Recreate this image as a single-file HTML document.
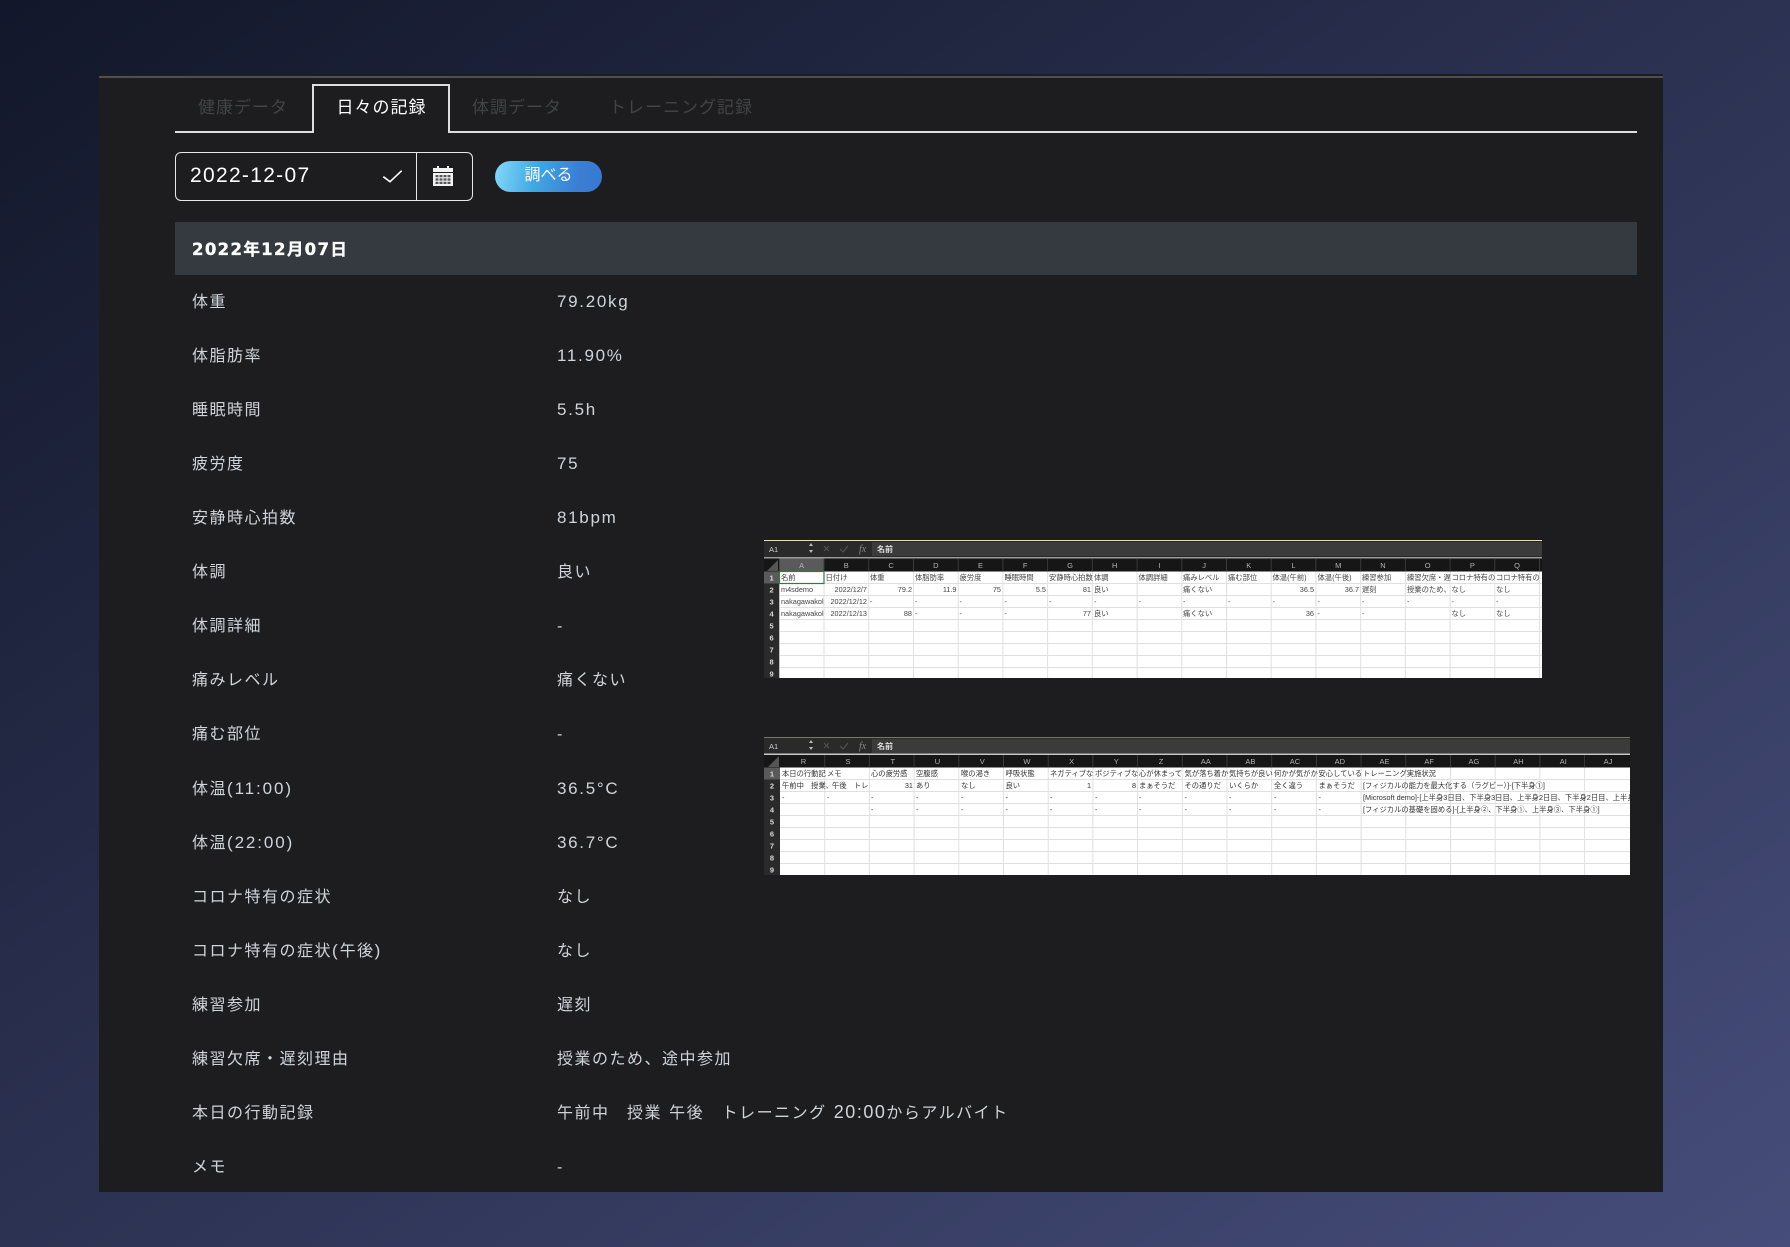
<!DOCTYPE html>
<html lang="ja"><head><meta charset="utf-8"><title>日々の記録</title>
<style>
html,body{margin:0;padding:0;width:1790px;height:1247px;overflow:hidden}
body{position:relative;background:linear-gradient(to bottom right,#12172a 0%,#2c3252 50%,#464d7a 100%);font-family:"Liberation Sans","Noto Sans CJK JP",sans-serif;color:#ced4da}
#panel{position:absolute;left:99px;top:74px;width:1564px;height:1118px;background:#1d1d1f;overflow:hidden}
#panel:before{content:"";position:absolute;left:0;right:0;top:2px;height:2px;background:#4e4f50}
.abs{position:absolute}
.tab{position:absolute;top:23px;line-height:22px;font-size:17px;letter-spacing:1px;color:#414346;white-space:nowrap}
#rows{position:absolute;left:93px;top:201.7px;width:1400px}
.row{height:54.1px;line-height:54.1px;display:flex;font-size:16px;letter-spacing:1.5px;white-space:pre}
.row b{font-weight:400;width:365px;display:block}
.row span{display:block}
.row i{font-style:normal;line-height:1}
.l{font-size:17px;letter-spacing:1.7px;position:relative;top:-1px}
.p{font-size:17px;letter-spacing:1.9px}
svg text{font-family:"Liberation Sans","Noto Sans CJK JP",sans-serif}
.c{font-size:7.3px;fill:#444}
#s2 .c{fill:#333}
.r{text-anchor:end}
.h{font-size:7.5px;fill:#b5b5b5;text-anchor:middle}
.n{font-size:7.5px;fill:#d8d8d8;text-anchor:middle;font-weight:700}
</style></head><body>
<div id="panel">
  <div class="abs" style="left:76px;top:57px;width:1462px;height:1.5px;background:#dedede"></div>
  <div class="abs" style="left:213px;top:10px;width:134px;height:47px;border:2px solid #dedede;border-bottom:0;background:#1d1d1f"></div>
  <div class="abs" style="left:215px;top:57px;width:134px;height:2px;background:#1d1d1f"></div>
  <div class="tab" style="left:99px">健康データ</div>
  <div class="tab" style="left:237.500px;color:#fff">日々の記録</div>
  <div class="tab" style="left:373px">体調データ</div>
  <div class="tab" style="left:510px">トレーニング記録</div>

  <div class="abs" style="left:76px;top:78px;width:296px;height:47px;border:1.5px solid #e8e8e8;border-radius:6px"></div>
  <div class="abs" style="left:316.5px;top:78px;width:1.5px;height:49px;background:#e8e8e8"></div>
  <div class="abs" style="left:91px;top:89px;line-height:26px;font-size:21px;letter-spacing:1.3px;color:#fff">2022-12-07</div>
  <svg class="abs" style="left:280px;top:90px" width="30" height="24" viewBox="0 0 30 24"><path d="M4.3 12.7L11 17.7L22.7 6.7" fill="none" stroke="#fff" stroke-width="1.6"/></svg>
  <svg class="abs" style="left:333px;top:91px" width="22" height="22" viewBox="0 0 22 22">
    <path d="M1 3H5V1H7V3H15V1H17V3H21V7H1Z" fill="#f2f2f2"/>
    <path d="M1 8H21V21H1Z" fill="#f2f2f2"/>
    <path d="M3.5 10h3v2.2h-3zM7.5 10h3v2.2h-3zM11.5 10h3v2.2h-3zM15.5 10h3v2.2h-3zM3.5 13.4h3v2.2h-3zM7.5 13.4h3v2.2h-3zM11.5 13.4h3v2.2h-3zM15.5 13.4h3v2.2h-3zM3.5 16.8h3v2.2h-3zM7.5 16.8h3v2.2h-3zM11.5 16.8h3v2.2h-3zM15.5 16.8h3v2.2h-3z" fill="#55565a"/>
  </svg>
  <div class="abs" style="left:396px;top:87px;width:107px;height:31px;border-radius:16px;background:linear-gradient(100deg,#84d8fb 0%,#3fa9e4 38%,#3a7fd5 75%,#3878d0 100%);color:#fff;font-size:16px;line-height:30px;text-align:center">調べる</div>

  <div class="abs" style="left:76px;top:148px;width:1462px;height:53px;background:#343a40"></div>
  <div class="abs" style="left:93px;top:165px;line-height:22px;font-family:'DejaVu Sans','Noto Sans CJK JP',sans-serif;font-weight:700;font-size:16.5px;letter-spacing:1.35px;color:#fff;white-space:nowrap;-webkit-text-stroke:.35px #fff">2022年12月07日</div>

  <div id="rows">
    <div class="row"><b>体重</b><span class="l">79.20kg</span></div>
    <div class="row"><b>体脂肪率</b><span class="l">11.90%</span></div>
    <div class="row"><b>睡眠時間</b><span class="l">5.5h</span></div>
    <div class="row"><b>疲労度</b><span class="l">75</span></div>
    <div class="row"><b>安静時心拍数</b><span class="l">81bpm</span></div>
    <div class="row"><b>体調</b><span>良い</span></div>
    <div class="row"><b>体調詳細</b><span>-</span></div>
    <div class="row"><b>痛みレベル</b><span>痛くない</span></div>
    <div class="row"><b>痛む部位</b><span>-</span></div>
    <div class="row"><b>体温<i class="p">(11:00)</i></b><span class="l">36.5°C</span></div>
    <div class="row"><b>体温<i class="p">(22:00)</i></b><span class="l">36.7°C</span></div>
    <div class="row"><b>コロナ特有の症状</b><span>なし</span></div>
    <div class="row"><b>コロナ特有の症状<i class="p">(</i>午後<i class="p">)</i></b><span>なし</span></div>
    <div class="row"><b>練習参加</b><span>遅刻</span></div>
    <div class="row"><b>練習欠席・遅刻理由</b><span>授業のため、途中参加</span></div>
    <div class="row"><b>本日の行動記録</b><span style="word-spacing:1.2px">午前中　授業 午後　トレーニング <i style="font-size:18px">20:00</i>からアルバイト</span></div>
    <div class="row"><b>メモ</b><span>-</span></div>
  </div>
</div>

<svg class="abs" style="left:0;top:0" width="1790" height="1247" viewBox="0 0 1790 1247">
<defs>
<filter id="bl" x="0" y="0" width="100%" height="100%"><feGaussianBlur stdDeviation="0.38"/></filter>
<filter id="bl2" x="0" y="0" width="100%" height="100%"><feGaussianBlur stdDeviation="0.28"/></filter>
<clipPath id="cp1"><rect x="764" y="540" width="778" height="138"/></clipPath>
<clipPath id="cp2"><rect x="764" y="737" width="866" height="138"/></clipPath>
</defs>

<!-- sheet 1 -->
<g clip-path="url(#cp1)"><g filter="url(#bl)">
<rect x="764" y="538" width="778" height="142" fill="#fff"/>
<rect x="764" y="538" width="778" height="3" fill="#e8dcb8"/>
<rect x="764" y="541" width="778" height="16" fill="#2a2a2a"/>
<rect x="872" y="542" width="670" height="14" fill="#3a3a3a"/>
<rect x="764" y="557" width="778" height="1.5" fill="#9a9a9a"/>
<rect x="764" y="558.5" width="778" height="13" fill="#121212"/>
<rect x="779.3" y="558.5" width="44.7" height="13" fill="#5a5a5a"/>
<rect x="762" y="571.5" width="17.3" height="108" fill="#2c2c2c"/>
<rect x="762" y="571.5" width="17.3" height="12" fill="#5a5a5a"/>
<path d="M767 571L778 560V571Z" fill="#555"/>
<path d="M779.3 583.5H1544M779.3 595.5H1544M779.3 607.5H1544M779.3 619.5H1544M779.3 631.5H1544M779.3 643.5H1544M779.3 655.5H1544M779.3 667.5H1544" stroke="#e0e0e0" fill="none"/>
<path d="M824 571.5V680M868.7 571.5V680M913.5 571.5V680M958.2 571.5V680M1002.9 571.5V680M1047.6 571.5V680M1092.3 571.5V680M1137.1 571.5V680M1181.8 571.5V680M1226.5 571.5V680M1271.2 571.5V680M1315.9 571.5V680M1360.7 571.5V680M1405.4 571.5V680M1450.1 571.5V680M1494.8 571.5V680M1539.5 571.5V680" stroke="#e0e0e0" fill="none"/>
<path d="M824 559V571M868.7 559V571M913.5 559V571M958.2 559V571M1002.9 559V571M1047.6 559V571M1092.3 559V571M1137.1 559V571M1181.8 559V571M1226.5 559V571M1271.2 559V571M1315.9 559V571M1360.7 559V571M1405.4 559V571M1450.1 559V571M1494.8 559V571M1539.5 559V571" stroke="#3a3a3a" fill="none"/>
<rect x="779.5" y="571.5" width="44.5" height="12" fill="none" stroke="#2f7a4c" stroke-width="1.2"/>
<text x="769" y="552" font-size="7.5" fill="#ccc">A1</text>
<path d="M809 546l2 -3 2 3zM809 550l2 3 2 -3z" fill="#bbb"/>
<path d="M824 546l5 5M829 546l-5 5" stroke="#555" fill="none"/>
<path d="M840 549l3 3 5 -6" stroke="#555" fill="none"/>
<text x="859" y="552" font-size="10" fill="#888" font-style="italic" style="font-family:'Liberation Serif',serif">fx</text>
<text x="877" y="552" font-size="8" fill="#ddd" font-weight="700">名前</text>
<g transform="translate(0,568)">
<text x="801.600" class="h">A</text><text x="846.300" class="h">B</text><text x="891.100" class="h">C</text><text x="935.800" class="h">D</text><text x="980.500" class="h">E</text><text x="1025.200" class="h">F</text><text x="1070" class="h">G</text><text x="1114.700" class="h">H</text><text x="1159.400" class="h">I</text><text x="1204.100" class="h">J</text><text x="1248.800" class="h">K</text><text x="1293.500" class="h">L</text><text x="1338.300" class="h">M</text><text x="1383" class="h">N</text><text x="1427.700" class="h">O</text><text x="1472.400" class="h">P</text><text x="1517.100" class="h">Q</text>
</g>
<text x="771.600" y="580.500" class="n">1</text><text x="771.600" y="592.500" class="n">2</text><text x="771.600" y="604.500" class="n">3</text><text x="771.600" y="616.500" class="n">4</text><text x="771.600" y="628.500" class="n">5</text><text x="771.600" y="640.500" class="n">6</text><text x="771.600" y="652.500" class="n">7</text><text x="771.600" y="664.500" class="n">8</text><text x="771.600" y="676.500" class="n">9</text>
<g transform="translate(0,580)">
<text class="c" x="781">名前</text><text class="c" x="825.500">日付け</text><text class="c" x="870">体重</text><text class="c" x="915">体脂肪率</text><text class="c" x="959.500">疲労度</text><text class="c" x="1004.500">睡眠時間</text><text class="c" x="1049">安静時心拍数</text><text class="c" x="1094">体調</text><text class="c" x="1138.500">体調詳細</text><text class="c" x="1183">痛みレベル</text><text class="c" x="1228">痛む部位</text><text class="c" x="1272.500">体温(午前)</text><text class="c" x="1317.500">体温(午後)</text><text class="c" x="1362">練習参加</text><text class="c" x="1407">練習欠席・遅</text><text class="c" x="1451.500">コロナ特有の</text><text class="c" x="1496">コロナ特有の</text>
</g>
<g transform="translate(0,592)">
<text class="c" x="781">m4sdemo</text><text class="c r" x="867">2022/12/7</text><text class="c r" x="912">79.2</text><text class="c r" x="956.500">11.9</text><text class="c r" x="1001">75</text><text class="c r" x="1046">5.5</text><text class="c r" x="1091">81</text><text class="c" x="1094">良い</text><text class="c" x="1183">痛くない</text><text class="c r" x="1314">36.5</text><text class="c r" x="1359">36.7</text><text class="c" x="1362">遅刻</text><text class="c" x="1407">授業のため、</text><text class="c" x="1451.500">なし</text><text class="c" x="1496">なし</text>
</g>
<g transform="translate(0,604)">
<text class="c" x="781">nakagawakol</text><text class="c r" x="867">2022/12/12</text><text class="c" x="870">-</text><text class="c" x="915">-</text><text class="c" x="959.500">-</text><text class="c" x="1004.500">-</text><text class="c" x="1049">-</text><text class="c" x="1094">-</text><text class="c" x="1138.500">-</text><text class="c" x="1183">-</text><text class="c" x="1228">-</text><text class="c" x="1272.500">-</text><text class="c" x="1317.500">-</text><text class="c" x="1362">-</text><text class="c" x="1407">-</text><text class="c" x="1451.500">-</text><text class="c" x="1496">-</text>
</g>
<g transform="translate(0,616)">
<text class="c" x="781">nakagawakol</text><text class="c r" x="867">2022/12/13</text><text class="c r" x="912">88</text><text class="c" x="915">-</text><text class="c" x="959.500">-</text><text class="c" x="1004.500">-</text><text class="c r" x="1091">77</text><text class="c" x="1094">良い</text><text class="c" x="1183">痛くない</text><text class="c r" x="1314">36</text><text class="c" x="1317.500">-</text><text class="c" x="1362">-</text><text class="c" x="1451.500">なし</text><text class="c" x="1496">なし</text>
</g>
</g></g>

<!-- sheet 2 -->
<g id="s2" clip-path="url(#cp2)"><g filter="url(#bl2)">
<rect x="764" y="735" width="866" height="142" fill="#fff"/>
<rect x="764" y="735" width="866" height="3" fill="#77776a"/>
<rect x="764" y="738" width="866" height="16" fill="#2a2a2a"/>
<rect x="872" y="739" width="758" height="14" fill="#3a3a3a"/>
<rect x="764" y="753.500" width="866" height="1.5" fill="#c8c8c8"/>
<rect x="764" y="755" width="866" height="12.500" fill="#121212"/>
<rect x="762" y="767.500" width="18" height="110" fill="#2c2c2c"/>
<rect x="762" y="767.500" width="18" height="12" fill="#5a5a5a"/>
<path d="M768 767L779 756V767Z" fill="#555"/>
<path d="M780 779.500H1632M780 791.500H1632M780 803.500H1632M780 815.500H1632M780 827.500H1632M780 839.500H1632M780 851.500H1632M780 863.500H1632" stroke="#e0e0e0" fill="none"/>
<path d="M824.700 767.500V877M869.400 767.500V877M914.100 767.500V877M958.800 767.500V877M1003.500 767.500V877M1048.200 767.500V877M1092.900 767.500V877M1137.600 767.500V877M1182.300 767.500V877M1227 767.500V877M1271.700 767.500V877M1316.400 767.500V877M1361.100 767.500V877M1405.800 767.500V877M1450.500 767.500V877M1495.200 767.500V877M1539.900 767.500V877M1584.600 767.500V877" stroke="#e0e0e0" fill="none"/>
<path d="M824.700 755V767M869.400 755V767M914.100 755V767M958.800 755V767M1003.500 755V767M1048.200 755V767M1092.900 755V767M1137.600 755V767M1182.300 755V767M1227 755V767M1271.700 755V767M1316.400 755V767M1361.100 755V767M1405.800 755V767M1450.500 755V767M1495.200 755V767M1539.900 755V767M1584.600 755V767" stroke="#3a3a3a" fill="none"/>
<text x="769" y="749" font-size="7.5" fill="#ccc">A1</text>
<path d="M809 743l2 -3 2 3zM809 747l2 3 2 -3z" fill="#bbb"/>
<path d="M824 743l5 5M829 743l-5 5" stroke="#555" fill="none"/>
<path d="M840 746l3 3 5 -6" stroke="#555" fill="none"/>
<text x="859" y="749" font-size="10" fill="#888" font-style="italic" style="font-family:'Liberation Serif',serif">fx</text>
<text x="877" y="749" font-size="8" fill="#ddd" font-weight="700">名前</text>
<g transform="translate(1,764)">
<text x="802.400" class="h">R</text><text x="847" class="h">S</text><text x="891.800" class="h">T</text><text x="936.500" class="h">U</text><text x="981.200" class="h">V</text><text x="1025.900" class="h">W</text><text x="1070.600" class="h">X</text><text x="1115.300" class="h">Y</text><text x="1160" class="h">Z</text><text x="1204.700" class="h">AA</text><text x="1249.400" class="h">AB</text><text x="1294" class="h">AC</text><text x="1338.800" class="h">AD</text><text x="1383.500" class="h">AE</text><text x="1428.200" class="h">AF</text><text x="1472.900" class="h">AG</text><text x="1517.500" class="h">AH</text><text x="1562.300" class="h">AI</text><text x="1607" class="h">AJ</text>
</g>
<text x="772" y="776.500" class="n">1</text><text x="772" y="788.500" class="n">2</text><text x="772" y="800.500" class="n">3</text><text x="772" y="812.500" class="n">4</text><text x="772" y="824.500" class="n">5</text><text x="772" y="836.500" class="n">6</text><text x="772" y="848.500" class="n">7</text><text x="772" y="860.500" class="n">8</text><text x="772" y="872.500" class="n">9</text>
<g transform="translate(0,776)">
<text class="c" x="782">本日の行動記</text><text class="c" x="827">メモ</text><text class="c" x="871">心の疲労感</text><text class="c" x="916">空腹感</text><text class="c" x="961">喉の渇き</text><text class="c" x="1005.500">呼吸状態</text><text class="c" x="1050">ネガティブな</text><text class="c" x="1095">ポジティブな</text><text class="c" x="1139">心が休まって</text><text class="c" x="1184.500">気が落ち着か</text><text class="c" x="1229">気持ちが良い</text><text class="c" x="1274">何かが気がか</text><text class="c" x="1318.500">安心している</text><text class="c" x="1363">トレーニング実施状況</text>
</g>
<g transform="translate(0,788)">
<text class="c" x="782">午前中　授業、</text><text class="c" x="832">午後　トレ</text><rect x="870" y="-8" width="44" height="11" fill="#fff"/><text class="c r" x="913">31</text><text class="c" x="916">あり</text><text class="c" x="961">なし</text><text class="c" x="1005.500">良い</text><text class="c r" x="1091">1</text><text class="c r" x="1136">8</text><text class="c" x="1139">まぁそうだ</text><text class="c" x="1184.500">その通りだ</text><text class="c" x="1229">いくらか</text><text class="c" x="1274">全く違う</text><text class="c" x="1318.500">まぁそうだ</text><text class="c" x="1363">[フィジカルの能力を最大化する（ラグビー）]-[下半身①]</text>
</g>
<g transform="translate(0,800)">
<text class="c" x="782">-</text><text class="c" x="827">-</text><text class="c" x="871">-</text><text class="c" x="916">-</text><text class="c" x="961">-</text><text class="c" x="1005.500">-</text><text class="c" x="1050">-</text><text class="c" x="1095">-</text><text class="c" x="1139">-</text><text class="c" x="1184.500">-</text><text class="c" x="1229">-</text><text class="c" x="1274">-</text><text class="c" x="1318.500">-</text><text class="c" x="1363">[Microsoft demo]-[上半身3日目、下半身3日目、上半身2日目、下半身2日目、上半身</text>
</g>
<g transform="translate(0,812)">
<text class="c" x="871">-</text><text class="c" x="916">-</text><text class="c" x="961">-</text><text class="c" x="1005.500">-</text><text class="c" x="1050">-</text><text class="c" x="1095">-</text><text class="c" x="1139">-</text><text class="c" x="1184.500">-</text><text class="c" x="1229">-</text><text class="c" x="1274">-</text><text class="c" x="1318.500">-</text><text class="c" x="1363">[フィジカルの基礎を固める]-[上半身②、下半身①、上半身③、下半身①]</text>
</g>
</g></g>
</svg>
</body></html>
